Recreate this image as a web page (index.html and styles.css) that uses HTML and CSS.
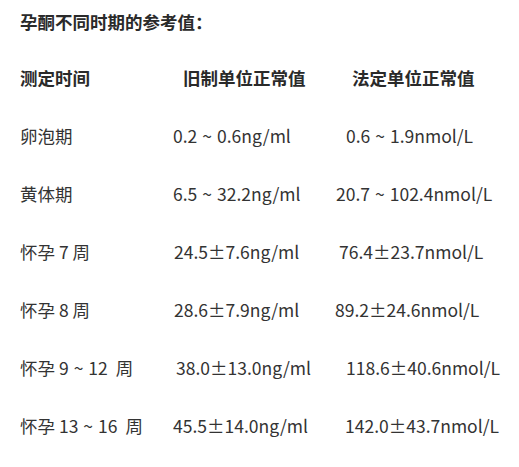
FILE: index.html
```html
<!DOCTYPE html>
<html lang="zh-CN">
<head>
<meta charset="utf-8">
<link rel="stylesheet" href="styles.css">
</head>
<body>
<div class="page">
  <h1 class="title">孕酮不同时期的参考值：</h1>
  <div class="table">
    <div class="cell head">测定时间</div>
    <div class="cell head c2 o10">旧制单位正常值</div>
    <div class="cell head c3 o17">法定单位正常值</div>

    <div class="cell">卵泡期</div>
    <div class="cell c2">0.2<span class="tl">~</span>0.6ng/ml</div>
    <div class="cell c3 o11">0.6<span class="tl">~</span>1.9nmol/L</div>

    <div class="cell">黄体期</div>
    <div class="cell c2">6.5<span class="tl">~</span>32.2ng/ml</div>
    <div class="cell c3 o1">20.7<span class="tl">~</span>102.4nmol/L</div>

    <div class="cell">怀孕 7 周</div>
    <div class="cell c2 o1">24.5±7.6ng/ml</div>
    <div class="cell c3 o4">76.4±23.7nmol/L</div>

    <div class="cell">怀孕 8 周</div>
    <div class="cell c2 o1">28.6±7.9ng/ml</div>
    <div class="cell c3">89.2±24.6nmol/L</div>

    <div class="cell">怀孕 9<span class="tl">~</span>12<span class="wk">周</span></div>
    <div class="cell c2 o3">38.0±13.0ng/ml</div>
    <div class="cell c3 o11">118.6±40.6nmol/L</div>

    <div class="cell">怀孕 13<span class="tl">~</span>16<span class="wk">周</span></div>
    <div class="cell c2">45.5±14.0ng/ml</div>
    <div class="cell c3 o10">142.0±43.7nmol/L</div>
  </div>
</div>
</body>
</html>
```
FILE: styles.css
```css
html, body {
  margin: 0;
  padding: 0;
  background: #ffffff;
}
.page {
  width: 519px;
  height: 467px;
  padding: 10px 0 0 20px;
  box-sizing: border-box;
  font-family: "Noto Sans CJK SC", "Noto Sans", sans-serif;
  color: #333333;
  font-size: 17.5px;
}
.title {
  margin: 0;
  font-size: 17.5px;
  line-height: 24px;
  font-weight: bold;
  color: #2a2a2a;
}
.table {
  margin-top: 15px;
  display: grid;
  grid-template-columns: 153px 162px 1fr;
  grid-auto-rows: 58px;
  align-items: center;
}
.cell {
  line-height: 24px;
  white-space: nowrap;
}
.head {
  font-weight: bold;
  color: #2a2a2a;
}
.tl {
  padding: 0 5px;
}
.wk {
  padding-left: 8px;
}
.o1 { padding-left: 1px; }
.o3 { padding-left: 3px; }
.o4 { padding-left: 4px; }
.o10 { padding-left: 10px; }
.o11 { padding-left: 11px; }
.o17 { padding-left: 17px; }
```
